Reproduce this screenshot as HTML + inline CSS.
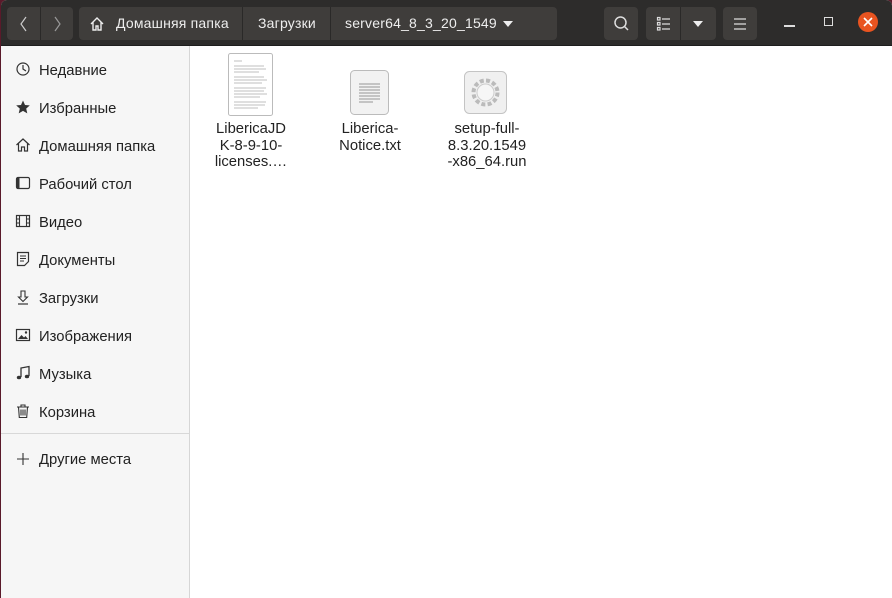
<!DOCTYPE html><html><head><meta charset="utf-8"><style>
*{margin:0;padding:0;box-sizing:border-box}
body{width:892px;height:598px;overflow:hidden;background:#5a1a2a;font-family:"Liberation Sans","DejaVu Sans",sans-serif;position:relative}
.win{position:absolute;left:1px;top:0;width:891px;height:598px;background:#fff;border-radius:6px 6px 0 0;overflow:hidden}
.hd{position:absolute;left:0;top:0;width:891px;height:46px;background:#2d2c2b;border-bottom:1px solid #1e1e1e}
.b{position:absolute;top:7px;height:33px;background:#3f3d3b;border-radius:4px;color:#eee;font-size:14px;line-height:33px}
.sep{position:absolute;top:0;width:1px;height:33px;background:#2a2928}
.sb{position:absolute;left:0;top:46px;width:189px;height:552px;background:#f6f6f6;border-right:1px solid #d6d6d6}
.it{position:absolute;left:38px;font-size:14.8px;color:#222;line-height:20px;margin-top:1.5px}
.ic{position:absolute;left:14px;width:16px;height:16px}
.fn{position:absolute;font-size:14.8px;color:#222;text-align:center;line-height:16.5px;width:90px}
</style></head><body><div class="win">
<div class="hd">
<div class="b" style="left:6px;width:66px"><div class="sep" style="left:33px"></div>
<svg style="position:absolute;left:12px;top:9px" width="10" height="16"><path d="M7 1L2 8l5 7" stroke="#ccc" fill="none" stroke-width="1.2"/></svg>
<svg style="position:absolute;left:45px;top:9px" width="10" height="16"><path d="M3 1l5 7-5 7" stroke="#999" fill="none" stroke-width="1.2"/></svg></div>
<div class="b" style="left:78px;width:478px">
<svg style="position:absolute;left:10px;top:9px" width="16" height="16"><path d="M2 8L8 2l6 6M4 6v8h3v-4h2v4h3V6" stroke="#eee" fill="none" stroke-width="1.4"/></svg>
<span style="position:absolute;left:37px;letter-spacing:0.2px">Домашняя папка</span><div class="sep" style="left:163px"></div>
<span style="position:absolute;left:179px;letter-spacing:0.2px">Загрузки</span><div class="sep" style="left:251px"></div>
<span style="position:absolute;left:266px;letter-spacing:0.2px">server64_8_3_20_1549</span>
<svg style="position:absolute;left:423px;top:13px" width="12" height="8"><path d="M1 1h10L6 7z" fill="#eee"/></svg></div>
<div class="b" style="left:603px;width:34px"><svg style="position:absolute;left:9px;top:8px" width="18" height="18"><circle cx="7.5" cy="7.5" r="5.5" stroke="#ddd" fill="none" stroke-width="1.5"/><path d="M11.5 11.5l3.5 3.5" stroke="#ddd" stroke-width="1.5"/></svg></div>
<div class="b" style="left:645px;width:70px"><div class="sep" style="left:34px"></div>
<svg style="position:absolute;left:10px;top:9px" width="16" height="16"><g stroke="#ddd" fill="none" stroke-width="1.2"><rect x="1.5" y="1.5" width="2.5" height="2.5"/><rect x="1.5" y="6.5" width="2.5" height="2.5"/><rect x="1.5" y="11.5" width="2.5" height="2.5"/><path d="M6 3h8M6 8h8M6 13h8"/></g></svg>
<svg style="position:absolute;left:46px;top:13px" width="12" height="8"><path d="M1 1h10L6 7z" fill="#eee"/></svg></div>
<div class="b" style="left:722px;width:34px"><svg style="position:absolute;left:9px;top:9px" width="16" height="16"><path d="M2 3h12M2 8h12M2 13h12" stroke="#ddd" stroke-width="1.2"/></svg></div>
<div style="position:absolute;left:783px;top:25px;width:11px;height:1.5px;background:#ddd"></div>
<div style="position:absolute;left:823px;top:17px;width:9px;height:9px;border:1.5px solid #ddd"></div>
<div style="position:absolute;left:857px;top:12px;width:20px;height:20px;border-radius:50%;background:#e95420"></div>
<svg style="position:absolute;left:862px;top:17px" width="10" height="10"><path d="M1 1l8 8M9 1l-8 8" stroke="#fff" stroke-width="1.6"/></svg>
</div>
<div class="sb">
<svg class="ic" style="top:15px" viewBox="0 0 16 16"><circle cx="8" cy="8" r="6" stroke="#333" fill="none" stroke-width="1.2"/><path d="M8 4v4l3 2" stroke="#333" fill="none" stroke-width="1.2"/></svg><div class="it" style="top:13px">Недавние</div>
<svg class="ic" style="top:53px" viewBox="0 0 16 16"><path d="M8 1.5l2 4.5 4.8.4-3.6 3.2 1.1 4.8L8 11.9 3.7 14.4l1.1-4.8L1.2 6.4 6 6z" fill="#333"/></svg><div class="it" style="top:51px">Избранные</div>
<svg class="ic" style="top:91px" viewBox="0 0 16 16"><path d="M1.5 8L8 2l6.5 6M3.5 6.5V14h3v-4h3v4h3V6.5" stroke="#333" fill="none" stroke-width="1.2"/></svg><div class="it" style="top:89px">Домашняя папка</div>
<svg class="ic" style="top:129px" viewBox="0 0 16 16"><rect x="1.5" y="2.5" width="13" height="11" rx="1.5" stroke="#333" fill="none" stroke-width="1.2"/><rect x="1.5" y="2.5" width="3" height="11" fill="#333"/></svg><div class="it" style="top:127px">Рабочий стол</div>
<svg class="ic" style="top:167px" viewBox="0 0 16 16"><rect x="1.5" y="2.5" width="13" height="11" stroke="#333" fill="none" stroke-width="1.2"/><path d="M4.5 2.5v11M11.5 2.5v11M1.5 6h3M1.5 10h3M11.5 6h3M11.5 10h3" stroke="#333" stroke-width="1.1"/></svg><div class="it" style="top:165px">Видео</div>
<svg class="ic" style="top:205px" viewBox="0 0 16 16"><path d="M2.5 1.5h11v9l-4 4h-7z" stroke="#333" fill="none" stroke-width="1.2"/><path d="M5 5h6M5 7.5h6M5 10h4" stroke="#333" stroke-width="1.1"/></svg><div class="it" style="top:203px">Документы</div>
<svg class="ic" style="top:243px" viewBox="0 0 16 16"><path d="M6 2h4v6h2.5L8 12.5 3.5 8H6z" stroke="#333" fill="none" stroke-width="1.1"/><path d="M3 15h10" stroke="#333" stroke-width="1.2"/></svg><div class="it" style="top:241px">Загрузки</div>
<svg class="ic" style="top:281px" viewBox="0 0 16 16"><rect x="1.5" y="2.5" width="13" height="11" stroke="#333" fill="none" stroke-width="1.2"/><path d="M3 12l3.5-4 2.5 2.5 1.5-1.5 2.5 3z" fill="#333"/><circle cx="11" cy="5.5" r="1.2" fill="#333"/></svg><div class="it" style="top:279px">Изображения</div>
<svg class="ic" style="top:319px" viewBox="0 0 16 16"><path d="M6 12V3l8-1.5V11" stroke="#333" fill="none" stroke-width="1.3"/><ellipse cx="4" cy="12.5" rx="2.2" ry="1.8" fill="#333"/><ellipse cx="12" cy="11.5" rx="2.2" ry="1.8" fill="#333"/></svg><div class="it" style="top:317px">Музыка</div>
<svg class="ic" style="top:357px" viewBox="0 0 16 16"><path d="M2 4h12M6 4V2h4v2M3.5 4l.8 10.5h7.4L12.5 4M6 6.5v6M8 6.5v6M10 6.5v6" stroke="#333" fill="none" stroke-width="1.1"/></svg><div class="it" style="top:355px">Корзина</div>
<div style="position:absolute;left:0;top:387px;width:188px;height:1px;background:#d8d8d8"></div>
<svg class="ic" style="top:405px" viewBox="0 0 16 16"><path d="M8 2v12M2 8h12" stroke="#333" stroke-width="1.1"/></svg><div class="it" style="top:402px">Другие места</div>
</div>
<svg style="position:absolute;left:227px;top:53px" width="46" height="64"><rect x="0.5" y="0.5" width="44" height="62" rx="2" fill="#fff" stroke="#bbb"/><g stroke="#aaa" stroke-width="0.8"><path d="M6 8h8M6 13h30M6 16h32M6 19h25M6 24h30M6 27h33M6 30h28M6 35h32M6 38h30M6 41h33M6 44h26M6 49h32M6 52h31M6 55h24"/></g></svg>
<svg style="position:absolute;left:349px;top:70px" width="40" height="46"><rect x="0.5" y="0.5" width="38" height="44" rx="4" fill="#f2f2f2" stroke="#bbb"/><path d="M9 14h21M9 17h21M9 20h21M9 23h21M9 26h21M9 29h21M9 32h14" stroke="#777" stroke-width="0.8"/></svg>
<svg style="position:absolute;left:463px;top:71px" width="44" height="44"><rect x="0.5" y="0.5" width="42" height="42" rx="5" fill="#f0f0f0" stroke="#c4c4c4"/><circle cx="21.5" cy="21.5" r="12" fill="none" stroke="#bbb" stroke-width="4" stroke-dasharray="4 2.3"/><circle cx="21.5" cy="21.5" r="8.5" fill="#f6f6f6" stroke="#ccc"/></svg>
<div class="fn" style="left:205px;top:121px">LibericaJD<br>K-8-9-10-<br>licenses.…</div>
<div class="fn" style="left:324px;top:121px">Liberica-<br>Notice.txt</div>
<div class="fn" style="left:441px;top:121px">setup-full-<br>8.3.20.1549<br>-x86_64.run</div>
</div></body></html>
